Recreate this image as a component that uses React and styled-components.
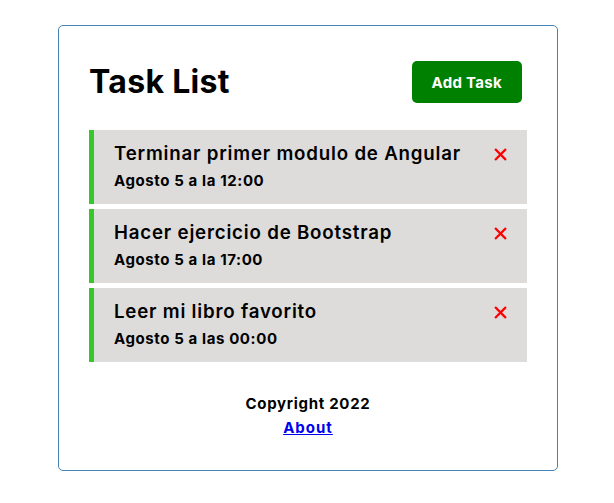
import React, { useState } from "react";
import styled, { createGlobalStyle } from "styled-components";

const GlobalStyle = createGlobalStyle`
  * {
    box-sizing: border-box;
    margin: 0;
    padding: 0;
  }
  body {
    font-family: "Inter", "Noto Sans", sans-serif;
    background: #fff;
    padding-left: 2px;
  }
`;

const Container = styled.div`
  width: 500px;
  margin: 25px auto 0;
  min-height: 300px;
  border: 1px solid steelblue;
  border-radius: 5px;
  padding: 30px;
`;

const Header = styled.header`
  display: flex;
  justify-content: space-between;
  align-items: center;
  margin-bottom: 22px;
`;

const Title = styled.h1`
  font-size: 32px;
  font-weight: 700;
  line-height: 48px;
  letter-spacing: 0.3px;
  color: #000;
`;

const Button = styled.button`
  background: ${(p) => p.color || "#000"};
  color: #fff;
  border: none;
  padding: 0 20px;
  height: 42px;
  margin: 5px;
  border-radius: 5px;
  font-size: 15px;
  font-weight: 700;
  letter-spacing: 0.3px;
  white-space: nowrap;
  font-family: inherit;
  cursor: pointer;
`;

const TaskItem = styled.div`
  background: #dddcdb;
  margin: 5px 0;
  padding: 10px 20px;
  border-left: 5px solid ${(p) => (p.reminder ? "#36c72b" : "transparent")};
  cursor: pointer;
`;

const TaskTitle = styled.h3`
  display: flex;
  justify-content: space-between;
  align-items: center;
  font-size: 18.7px;
  font-weight: 600;
  line-height: 28px;
  letter-spacing: 0.8px;
  color: #000;
`;

const TaskDay = styled.p`
  font-size: 15px;
  font-weight: 700;
  line-height: 26px;
  letter-spacing: 0.6px;
  color: #000;
`;

const DeleteIcon = styled.svg`
  width: 13px;
  height: 13px;
  flex-shrink: 0;
`;

const Footer = styled.footer`
  margin-top: 30px;
  text-align: center;
  font-size: 15px;
  font-weight: 700;
  line-height: 24px;
  letter-spacing: 0.7px;

  a {
    color: #0000ee;
    text-decoration: underline;
    letter-spacing: 1px;
  }
`;

const tasksData = [
  { id: 1, text: "Terminar primer modulo de Angular", day: "Agosto 5 a la 12:00", reminder: true },
  { id: 2, text: "Hacer ejercicio de Bootstrap", day: "Agosto 5 a la 17:00", reminder: true },
  { id: 3, text: "Leer mi libro favorito", day: "Agosto 5 a las 00:00", reminder: true },
];

const Task = ({ task, onDelete }) => (
  <TaskItem reminder={task.reminder}>
    <TaskTitle>
      {task.text}
      <DeleteIcon viewBox="0 0 14 14" onClick={() => onDelete(task.id)}>
        <path d="M2 2 L12 12 M12 2 L2 12" stroke="red" strokeWidth="2.4" strokeLinecap="square" />
      </DeleteIcon>
    </TaskTitle>
    <TaskDay>{task.day}</TaskDay>
  </TaskItem>
);

const App = () => {
  const [tasks, setTasks] = useState(tasksData);

  return (
    <>
      <GlobalStyle />
      <Container>
        <Header>
          <Title>Task List</Title>
          <Button color="green">Add Task</Button>
        </Header>
        {tasks.map((task) => (
          <Task key={task.id} task={task} onDelete={(id) => setTasks(tasks.filter((t) => t.id !== id))} />
        ))}
        <Footer>
          <p>Copyright 2022</p>
          <a href="#">About</a>
        </Footer>
      </Container>
    </>
  );
};

export default App;
